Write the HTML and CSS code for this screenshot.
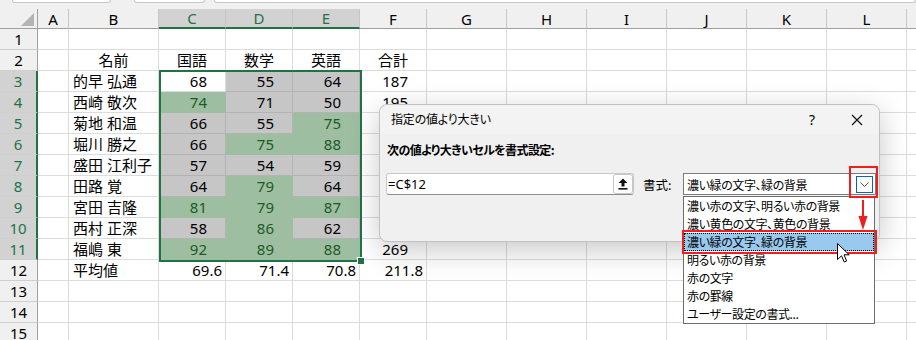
FILE: index.html
```html
<!DOCTYPE html>
<html lang="ja">
<head>
  <meta charset="UTF-8" />
  <title>指定の値より大きい</title>
  <link rel="stylesheet" href="styles.css">
</head>
<body>
  <div class="ribbon">
    <span class="box box-name"></span>
    <span class="box box-fx"></span>
    <span class="box box-formula"></span>
  </div>

  <div class="sheet">
    <div class="row hdr">
      <span class="corner"><svg width="13" height="13" viewBox="0 0 13 13"><polygon points="13,0 13,13 0,13" fill="#b4b4b4"/></svg></span>
      <span>A</span><span>B</span><span class="on">C</span><span class="on">D</span><span class="on">E</span><span>F</span><span>G</span><span>H</span><span>I</span><span>J</span><span>K</span><span>L</span><span></span>
    </div>
    <div class="row"><span class="rh">1</span><span></span><span></span><span></span><span></span><span></span><span></span><span></span><span></span><span></span><span></span><span></span><span></span><span></span></div>
    <div class="row"><span class="rh">2</span><span></span><span class="c">名前</span><span class="c">国語</span><span class="c">数学</span><span class="c">英語</span><span class="c">合計</span><span></span><span></span><span></span><span></span><span></span><span></span><span></span></div>
    <div class="row sel"><span class="rh">3</span><span></span><span class="name">的早 弘通</span><span class="n">68</span><span class="n gy">55</span><span class="n gy">64</span><span class="n">187</span><span></span><span></span><span></span><span></span><span></span><span></span><span></span></div>
    <div class="row sel"><span class="rh">4</span><span></span><span class="name">西崎 敬次</span><span class="n gr">74</span><span class="n gy">71</span><span class="n gy">50</span><span class="n">195</span><span></span><span></span><span></span><span></span><span></span><span></span><span></span></div>
    <div class="row sel"><span class="rh">5</span><span></span><span class="name">菊地 和温</span><span class="n gy">66</span><span class="n gy">55</span><span class="n gr">75</span><span></span><span></span><span></span><span></span><span></span><span></span><span></span><span></span></div>
    <div class="row sel"><span class="rh">6</span><span></span><span class="name">堀川 勝之</span><span class="n gy">66</span><span class="n gr">75</span><span class="n gr">88</span><span></span><span></span><span></span><span></span><span></span><span></span><span></span><span></span></div>
    <div class="row sel"><span class="rh">7</span><span></span><span class="name">盛田 江利子</span><span class="n gy">57</span><span class="n gy">54</span><span class="n gy">59</span><span></span><span></span><span></span><span></span><span></span><span></span><span></span><span></span></div>
    <div class="row sel"><span class="rh">8</span><span></span><span class="name">田路 覚</span><span class="n gy">64</span><span class="n gr">79</span><span class="n gy">64</span><span></span><span></span><span></span><span></span><span></span><span></span><span></span><span></span></div>
    <div class="row sel"><span class="rh">9</span><span></span><span class="name">宮田 吉隆</span><span class="n gr">81</span><span class="n gr">79</span><span class="n gr">87</span><span></span><span></span><span></span><span></span><span></span><span></span><span></span><span></span></div>
    <div class="row sel"><span class="rh">10</span><span></span><span class="name">西村 正深</span><span class="n gy">58</span><span class="n gr">86</span><span class="n gy">62</span><span></span><span></span><span></span><span></span><span></span><span></span><span></span><span></span></div>
    <div class="row sel"><span class="rh">11</span><span></span><span class="name">福嶋 東</span><span class="n gr">92</span><span class="n gr">89</span><span class="n gr">88</span><span class="n">269</span><span></span><span></span><span></span><span></span><span></span><span></span><span></span></div>
    <div class="row"><span class="rh">12</span><span></span><span class="name">平均値</span><span class="avg">69.6</span><span class="avg">71.4</span><span class="avg">70.8</span><span class="avg">211.8</span><span></span><span></span><span></span><span></span><span></span><span></span><span></span></div>
    <div class="row"><span class="rh">13</span><span></span><span></span><span></span><span></span><span></span><span></span><span></span><span></span><span></span><span></span><span></span><span></span><span></span></div>
    <div class="row"><span class="rh">14</span><span></span><span></span><span></span><span></span><span></span><span></span><span></span><span></span><span></span><span></span><span></span><span></span><span></span></div>
    <div class="row last"><span class="rh">15</span><span></span><span></span><span></span><span></span><span></span><span></span><span></span><span></span><span></span><span></span><span></span><span></span><span></span></div>
  </div>

  <!-- selection C3:E11 -->
  <div class="selection"></div>
  <div class="fill-handle"></div>

  <div class="dialog">
    <div class="dlg-title">
      <span class="dlg-caption">指定の値より大きい</span>
      <span class="help">?</span>
      <span class="close"><svg width="12" height="12" viewBox="0 0 12 12"><path d="M1 1 L11 11 M11 1 L1 11" stroke="#111" stroke-width="1.2" fill="none"/></svg></span>
    </div>
    <div class="dlg-label">次の値より大きいセルを書式設定:</div>
    <div class="dlg-inputs">
      <div class="field">
        <span class="field-text">=C$12</span>
        <span class="upload"><svg width="10" height="12" viewBox="0 0 10 12"><polygon points="5,0.5 9.5,5 6.5,5 6.5,8.5 3.5,8.5 3.5,5 0.5,5" fill="#111"/><rect x="0.5" y="10" width="9" height="1.6" fill="#111"/></svg></span>
      </div>
      <span class="fmt-label">書式:</span>
      <div class="combo">
        <span>濃い緑の文字、緑の背景</span>
        <span class="ddbtn"><svg width="9" height="5" viewBox="0 0 9 5"><path d="M0.5 0.5 L4.5 4.5 L8.5 0.5" stroke="#555" stroke-width="1" fill="none"/></svg></span>
      </div>
    </div>
    <div class="dd-list">
      <div class="opt">濃い赤の文字、明るい赤の背景</div>
      <div class="opt">濃い黄色の文字、黄色の背景</div>
      <div class="opt on">濃い緑の文字、緑の背景</div>
      <div class="opt">明るい赤の背景</div>
      <div class="opt">赤の文字</div>
      <div class="opt">赤の罫線</div>
      <div class="opt">ユーザー設定の書式...</div>
    </div>
  </div>

  <!-- annotations -->
  <div class="mark mark-btn"></div>
  <div class="mark mark-item"></div>
  <svg class="red-arrow" width="12" height="30" viewBox="0 0 12 30"><line x1="6" y1="0" x2="6" y2="18" stroke="#f21d1d" stroke-width="2"/><polygon points="1.5,16 10.5,16 6,30" fill="#f21d1d"/></svg>
  <svg class="pointer" width="14" height="21" viewBox="0 0 14 21"><path d="M0.5 0.5 L0.5 16.5 L4.5 12.8 L7.2 19 L9.6 18 L7 11.8 L12.2 11.8 Z" fill="#fff" stroke="#000" stroke-width="1" stroke-linejoin="round"/></svg>
</body>
</html>
```

FILE: styles.css
```css
body {
  margin: 0;
  width: 916px;
  height: 340px;
  overflow: hidden;
  position: relative;
  background: #fff;
  color: #000;
  font-family: "Noto Sans", "Noto Sans CJK JP", sans-serif;
}

/* top strip (name box / formula bar edges) */
.ribbon {
  height: 9px;
  background: #f0f0f0;
  display: flex;
  align-items: flex-start;
}

.box {
  height: 2px;
  background: #fff;
  border: 1px solid #c8c8c8;
  border-top: none;
  border-radius: 0 0 4px 4px;
}

.box-name { margin-left: 12px; width: 97px; }
.box-fx { margin-left: 23px; width: 69px; }
.box-formula { margin-left: 9px; width: 700px; }

.sheet {
  width: 916px;
  overflow: hidden;
}

/* grid */
.row {
  display: grid;
  grid-template-columns: 38px 31px 90px 67px 67px 67px 67px 80px 80px 80px 80px 80px 80px 80px;
  height: 21px;
}

.row.last {
  height: 17px;
  overflow: hidden;
}

.row span {
  box-sizing: border-box;
  border-right: 1px solid #dcdcdc;
  border-bottom: 1px solid #dcdcdc;
  font-size: 15px;
  line-height: 20px;
  white-space: nowrap;
  overflow: hidden;
}

.row.last span {
  height: 21px;
}

.hdr {
  height: 20px;
}

.hdr span {
  background: #f0f0f0;
  border-right-color: #c6c6c6;
  border-bottom-color: #a0a0a0;
  display: flex;
  align-items: center;
  justify-content: center;
}

.hdr .on {
  background: #d2d2d2;
  color: #217346;
  border-bottom: 2px solid #217346;
}

.hdr .corner {
  justify-content: flex-end;
  align-items: flex-end;
  padding: 0 3px 2px 0;
  border-right-color: #a0a0a0;
}

.row .rh {
  background: #f0f0f0;
  text-align: center;
  border-right-color: #a0a0a0;
  border-bottom-color: #cfcfcf;
}

.sel .rh {
  background: #d2d2d2;
  color: #217346;
  border-right: 2px solid #217346;
}

.row .c { text-align: center; }
.row .name { padding-left: 4px; }
.row .n { text-align: right; padding-right: 18px; }
.row .avg { text-align: right; padding-right: 3px; }

.row .gy {
  background: #c6c6c6;
  border-color: #b3b3b3;
}

.row .gr {
  background: #9dbea0;
  color: #1d5a25;
  border-color: #9dbea0;
}

.selection {
  position: absolute;
  left: 159px;
  top: 70px;
  width: 203px;
  height: 192px;
  box-sizing: border-box;
  border: 2px solid #217346;
}

.fill-handle {
  position: absolute;
  left: 357px;
  top: 257px;
  width: 6px;
  height: 6px;
  background: #217346;
  border: 1px solid #fff;
}

/* dialog */
.dialog {
  position: absolute;
  left: 379px;
  top: 104px;
  width: 501px;
  height: 138px;
  box-sizing: border-box;
  background: #f0f0f0;
  border: 1px solid #c2c2c2;
  border-radius: 8px;
  box-shadow: 0 8px 30px rgba(0, 0, 0, 0.22);
  font-family: "Noto Sans CJK JP", sans-serif;
  font-feature-settings: "palt";
  font-size: 12px;
}

.dlg-title {
  height: 29px;
  display: flex;
  align-items: center;
  background: #f3f3f3;
  border-radius: 8px 8px 0 0;
}

.dlg-caption {
  flex: 1;
  padding: 0 0 2px 11px;
  letter-spacing: -0.2px;
}

.help {
  width: 46px;
  text-align: center;
  font-family: "Noto Sans", sans-serif;
  font-size: 14px;
}

.close {
  width: 44px;
  display: flex;
  justify-content: center;
}

.dlg-label {
  margin: 8px 0 0 7px;
  line-height: 16px;
  font-weight: bold;
  letter-spacing: -0.6px;
}

.dlg-inputs {
  display: flex;
  align-items: center;
  margin-top: 15px;
  padding-left: 6px;
}

.field {
  width: 248px;
  height: 22px;
  box-sizing: border-box;
  background: #fff;
  border: 1px solid #c8c8c8;
  border-bottom-color: #8c8c8c;
  border-radius: 3px;
  display: flex;
  align-items: center;
  justify-content: space-between;
  padding: 0 0 0 1px;
}

.field-text {
  font-family: "Noto Sans", sans-serif;
  font-size: 13px;
}

.upload {
  width: 20px;
  height: 20px;
  box-sizing: border-box;
  background: #fff;
  border: 1px solid #c6c6c6;
  border-radius: 3px;
  display: flex;
  align-items: center;
  justify-content: center;
}

.fmt-label {
  width: 40px;
  margin-left: 9px;
  font-size: 12.5px;
}

.combo {
  width: 193px;
  height: 22px;
  box-sizing: border-box;
  background: #fff;
  border: 1px solid #7a7a7a;
  display: flex;
  align-items: center;
  justify-content: space-between;
  padding-left: 3px;
  letter-spacing: -0.4px;
}

.ddbtn {
  width: 17px;
  height: 17px;
  box-sizing: border-box;
  margin-right: 2px;
  background: #fff;
  border: 1px solid #0067c0;
  display: flex;
  align-items: center;
  justify-content: center;
}

.dd-list {
  position: absolute;
  left: 303px;
  top: 91px;
  width: 192px;
  box-sizing: border-box;
  background: #fff;
  border: 1px solid #6e6e6e;
  letter-spacing: -0.4px;
}

.opt {
  height: 18px;
  line-height: 18px;
  padding-left: 3px;
  white-space: nowrap;
}

.opt.on {
  background: #99c9ef;
  outline: 1px dotted #000;
  outline-offset: -1px;
}

/* red annotations */
.mark {
  position: absolute;
  box-sizing: border-box;
  border: 2px solid #f21d1d;
}

.mark-btn {
  left: 849px;
  top: 166px;
  width: 29px;
  height: 32px;
}

.mark-item {
  left: 682px;
  top: 230px;
  width: 195px;
  height: 24px;
}

.red-arrow {
  position: absolute;
  left: 857px;
  top: 200px;
}

.pointer {
  position: absolute;
  left: 837px;
  top: 243px;
}
```
